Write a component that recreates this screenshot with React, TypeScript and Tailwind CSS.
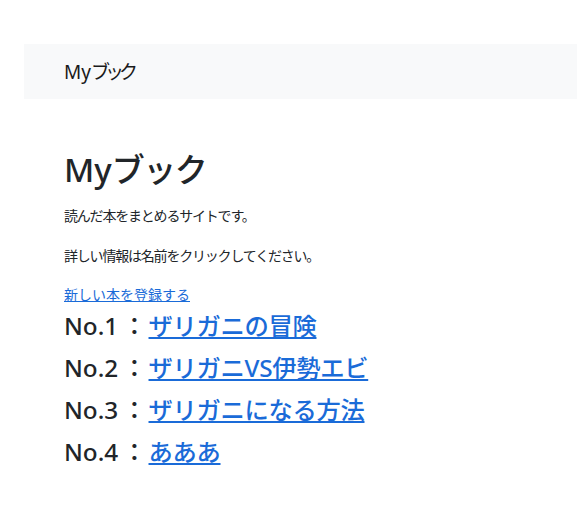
const books = [
  { id: 1, title: "ザリガニの冒険" },
  { id: 2, title: "ザリガニVS伊勢エビ" },
  { id: 3, title: "ザリガニになる方法" },
  { id: 4, title: "あああ" },
];

const App = () => {
  return (
    <div className="min-h-[509px] bg-white pt-[44px] text-[#212529] font-['Noto_Sans','Noto_Sans_CJK_JP',sans-serif]">
      <nav className="ml-[24px] flex h-[55px] items-center bg-[#f8f9fa] pl-[40px]">
        <a href="#" className="text-[19px] leading-[30px] text-[#1a1a1a]">
          My<span className="tracking-[-5px]">ブック</span>
        </a>
      </nav>

      <main className="flex flex-col pl-[64px]">
        <h1 className="mt-[52px] text-[33px] font-medium leading-[37px]">
          My<span className="tracking-[-1.5px]">ブック</span>
        </h1>
        <p className="mt-[16px] text-[14px] leading-[24px] tracking-[-1.2px]">
          読んだ本をまとめるサイトです。
        </p>
        <p className="mt-[16px] text-[14px] leading-[24px] tracking-[-1.2px]">
          詳しい情報は名前をクリックしてください。
        </p>
        <div className="mt-[16px] text-[14px] leading-[21px]">
          <a href="#" className="text-[#1a6bd8] underline">
            新しい本を登録する
          </a>
        </div>
        {books.map((b) => (
          <h3 key={b.id} className="text-[24.3px] font-medium leading-[42px]">
            No.{b.id}
            <span className="ml-[4px] mr-[2px]">：</span>
            <a href="#" className="text-[#1a6bd8] underline tracking-[-0.3px]">
              {b.title}
            </a>
          </h3>
        ))}
      </main>
    </div>
  );
};

export default App;
